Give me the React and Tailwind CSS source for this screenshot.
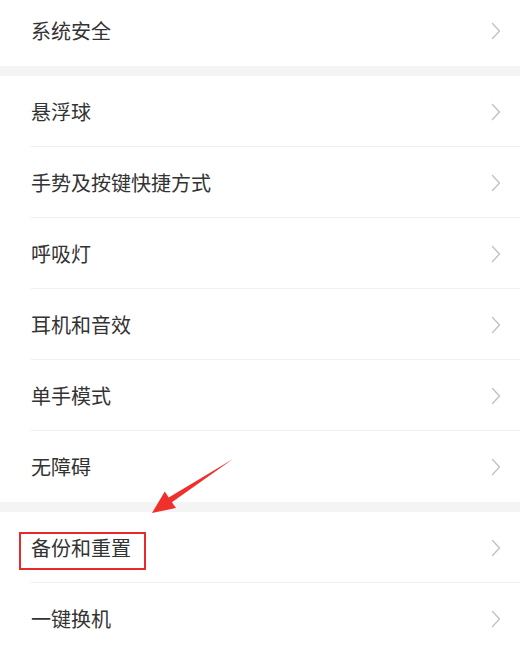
import React from 'react';

const groups = [
  ['系统安全'],
  ['悬浮球', '手势及按键快捷方式', '呼吸灯', '耳机和音效', '单手模式', '无障碍'],
  ['备份和重置', '一键换机'],
];

function Chevron() {
  return (
    <svg width="10" height="18" viewBox="0 0 10 18" fill="none" className="mr-[19px] shrink-0">
      <path d="M1.5 1.5 L8.5 9 L1.5 16.5" stroke="#c2c2c2" strokeWidth="1.4" strokeLinecap="round" strokeLinejoin="round" />
    </svg>
  );
}

function Row({ label, last }) {
  const boxed = label === '备份和重置';
  return (
    <div className="relative h-[71px] flex items-center justify-between pl-[31px]">
      <span>{label}</span>
      <Chevron />
      {boxed && (
        <div className="absolute left-[19px] top-[20px] w-[127px] h-[38px] border-2 border-[#e8292c]" />
      )}
      {!last && <div className="absolute left-[31px] right-0 bottom-0 h-px bg-[#efefef]" />}
    </div>
  );
}

export default function App() {
  return (
    <div
      className="relative w-[520px] h-[648px] overflow-hidden bg-white text-[20px] text-[#333333]"
      style={{ fontFamily: '"Noto Sans CJK SC", "Noto Sans", sans-serif' }}
    >
      <div className="mt-[-5px]">
        {groups.map((g, gi) => (
          <div key={gi}>
            {gi > 0 && <div className="h-[10px] bg-[#f4f4f4]" />}
            {g.map((label, i) => (
              <Row key={label} label={label} last={i === g.length - 1} />
            ))}
          </div>
        ))}
      </div>
      <svg className="absolute left-0 top-0" width="520" height="648" viewBox="0 0 520 648">
        <polygon
          points="152,513 164.8,491.6 168.7,497.6 233,459 171.9,502.2 176,508"
          fill="#f0302c"
        />
      </svg>
    </div>
  );
}
